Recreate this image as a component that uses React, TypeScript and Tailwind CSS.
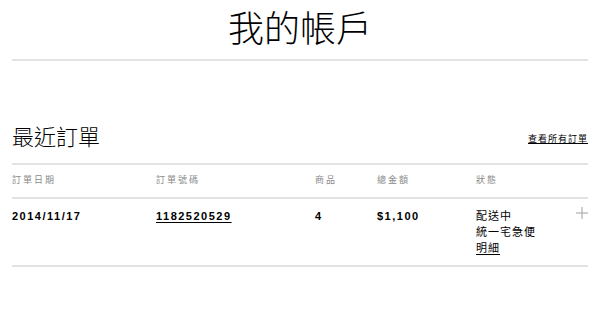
export default function App() {
  return (
    <div className="min-h-[315px] w-[600px] bg-white text-black" style={{ fontFamily: '"Liberation Sans", "Noto Sans CJK TC", sans-serif' }}>
      <div className="mx-3">
        {/* Page title */}
        <h1 className="pt-[5px] pb-[12px] text-center text-[36px] leading-[42px] font-light" style={{ fontFamily: '"Noto Sans CJK TC", sans-serif' }}>我的帳戶</h1>
        <div className="h-[2px] bg-[#e3e3e3]" />

        {/* Recent orders header */}
        <div className="mt-[60px] flex items-end justify-between pb-[14px]">
          <h2 className="text-[22px] leading-[28px] font-light" style={{ fontFamily: '"Noto Sans CJK TC", sans-serif' }}>最近訂單</h2>
          <a href="#" className="mb-[4px] text-[9px] leading-[12px] tracking-[1px] underline">查看所有訂單</a>
        </div>
        <div className="h-[2px] bg-[#e3e3e3]" />

        {/* Table header */}
        <div className="flex h-[32px] items-center text-[9px] tracking-[2px] text-[#8a8a8a]">
          <div className="w-[144px]">訂單日期</div>
          <div className="w-[159px]">訂單號碼</div>
          <div className="w-[62px]">商品</div>
          <div className="w-[99px]">總金額</div>
          <div className="flex-1">狀態</div>
        </div>
        <div className="h-[2px] bg-[#e3e3e3]" />

        {/* Order row */}
        <div className="flex pt-[9px] pb-[9px] text-[11px] leading-[16px] font-bold tracking-[1.5px]">
          <div className="w-[144px]">2014/11/17</div>
          <div className="w-[159px]">
            <a href="#" className="underline underline-offset-2">1182520529</a>
          </div>
          <div className="w-[62px]">4</div>
          <div className="w-[99px]">$1,100</div>
          <div className="flex-1 font-normal tracking-[1px]">
            <div>配送中</div>
            <div>統一宅急便</div>
            <a href="#" className="underline underline-offset-2">明細</a>
          </div>
          <div className="h-[16px] w-[12px]">
            <svg width="12" height="12" viewBox="0 0 12 12" className="mt-[-1px]">
              <path d="M6 0V12M0 6H12" stroke="#a0a0a0" strokeWidth="1" />
            </svg>
          </div>
        </div>
        <div className="h-[2px] bg-[#e3e3e3]" />
      </div>
    </div>
  );
}
